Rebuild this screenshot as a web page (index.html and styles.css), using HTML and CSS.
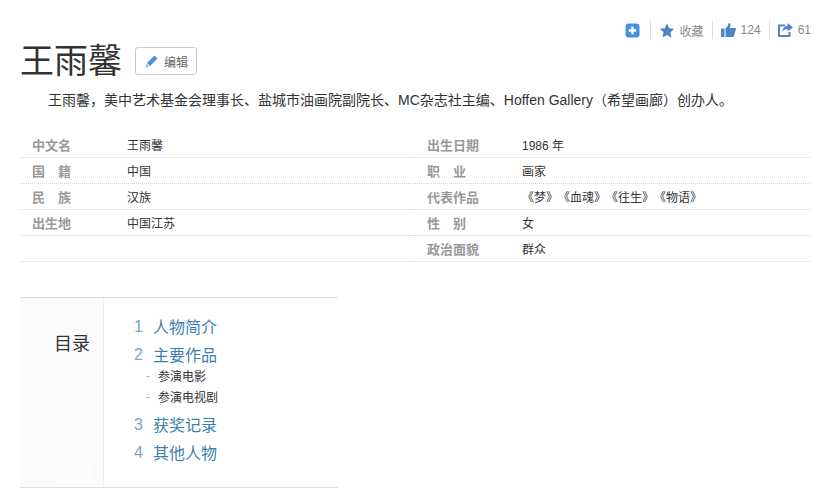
FILE: index.html
```html
<!DOCTYPE html>
<html lang="zh-CN">
<head>
<meta charset="utf-8">
<title>王雨馨</title>
<link rel="stylesheet" href="styles.css">
</head>
<body>
<div class="page">
  <div class="tools">
    <span class="tool"><svg class="ic" width="15" height="15" viewBox="0 0 15 15"><rect x="0.5" y="0.5" width="14" height="14" rx="3" fill="#4a90e2"/><path d="M7.5 3.8v7.4M3.8 7.5h7.4" stroke="#fff" stroke-width="2.4"/></svg></span>
    <span class="tool"><svg class="ic" width="16" height="15" viewBox="0 0 15 15"><path d="M7.5 0.5l2.2 4.700 5 .6-3.700 3.500 1 5.100-4.500-2.500-4.500 2.500 1-5.100L.3 5.800l5-.6z" fill="#4e85c5"/></svg><span>收藏</span></span>
    <span class="tool"><svg class="ic" width="15" height="14" viewBox="0 0 15 14"><path d="M0 5.500h3.500V14H0z M4.500 5.500L7 2.500 7.500 0c1.800 0 2.300 1.500 1.800 3L9 5H14c1 0 1.200 1 .8 1.800L13 13c-.2.600-.7 1-1.300 1H4.500z" fill="#4e85c5"/></svg><span>124</span></span>
    <span class="tool"><svg class="ic" width="15" height="14" viewBox="0 0 15 14"><path d="M7 2.500H1v10.500h10.500V9" fill="none" stroke="#4e85c5" stroke-width="2"/><path d="M9.500 0L15 4.200 9.500 8.500V6C7 6 5.500 7 4.500 9 4.500 5.500 6.500 3 9.500 2.700z" fill="#4e85c5"/></svg><span>61</span></span>
  </div>

  <div class="title-row">
    <h1 class="title">王雨馨</h1>
    <a class="edit"><svg width="13" height="13" viewBox="0 0 13 13"><path d="M9.500 .5l3 3-7.500 7.500-3-3z" fill="#4a90e2"/><path d="M1.300 8.700L4.300 11.700 .5 12.500z" fill="#8db8ea"/></svg><span>编辑</span></a>
  </div>

  <p class="desc">王雨馨，美中艺术基金会理事长、盐城市油画院副院长、MC杂志社主编、Hoffen Gallery（希望画廊）创办人。</p>

  <div class="info">
    <dl class="col">
      <div class="row"><dt>中文名</dt><dd>王雨馨</dd></div>
      <div class="row"><dt class="spaced">国籍</dt><dd>中国</dd></div>
      <div class="row"><dt class="spaced">民族</dt><dd>汉族</dd></div>
      <div class="row"><dt>出生地</dt><dd>中国江苏</dd></div>
      <div class="row"><dt></dt><dd></dd></div>
    </dl>
    <dl class="col">
      <div class="row"><dt>出生日期</dt><dd>1986 年</dd></div>
      <div class="row"><dt class="spaced">职业</dt><dd>画家</dd></div>
      <div class="row"><dt>代表作品</dt><dd class="works">《梦》《血魂》《往生》《物语》</dd></div>
      <div class="row"><dt class="spaced">性别</dt><dd>女</dd></div>
      <div class="row"><dt>政治面貌</dt><dd>群众</dd></div>
    </dl>
  </div>

  <div class="toc">
    <div class="toc-head">目录</div>
    <ol class="toc-list">
      <li class="lv1"><span class="num">1</span><span>人物简介</span></li>
      <li class="lv1"><span class="num">2</span><span>主要作品</span></li>
      <li class="lv2 first"><span class="dash">-</span><span>参演电影</span></li>
      <li class="lv2"><span class="dash">-</span><span>参演电视剧</span></li>
      <li class="lv1 after"><span class="num">3</span><span>获奖记录</span></li>
      <li class="lv1"><span class="num">4</span><span>其他人物</span></li>
    </ol>
    <div class="mark">ina 新浪</div>
  </div>
</div>
</body>
</html>
```
FILE: styles.css
```css
* { box-sizing: border-box; }
html, body { margin: 0; padding: 0; }
body { background: #fff; color: #333; font-family: "Liberation Sans", "Noto Sans CJK SC", sans-serif; overflow: hidden; }
.page { width: 823px; height: 492px; padding: 21px 12px 0 20px; }

.tools { display: flex; justify-content: flex-end; align-items: center; height: 18px; font-size: 12px; color: #888; }
.tool { display: flex; align-items: center; gap: 5px; padding: 0 8px; border-left: 1px solid #ddd; height: 18px; }
.tool:first-child { border-left: 0; padding-left: 0; padding-right: 10px; }
.tool:last-child { padding-right: 0; }
.tool .ic { flex: none; }

.title-row { display: flex; align-items: center; gap: 13px; margin-top: 3px; height: 38px; }
.title { margin: 0; font-size: 34px; line-height: 38px; font-weight: 400; color: #333; }
.edit { display: flex; align-items: center; gap: 6px; width: 62px; height: 28px; padding-left: 9px; border: 1px solid #ccc; border-radius: 3px; font-size: 12px; color: #666; }

.desc { margin: 8px 0 0; font-size: 14px; line-height: 24px; text-indent: 28px; color: #333; }

.info { display: flex; margin-top: 20px; width: 790px; }
.col { flex: 1; margin: 0; }
.row { display: flex; align-items: center; height: 26px; border-bottom: 1px dotted #d4d4d4; font-size: 12px; }
.row dt { width: 107px; padding-left: 12px; font-size: 13px; font-weight: 700; color: #999; flex: none; }
.row dt.spaced { width: 51px; margin-right: 56px; text-align-last: justify; }
.row dd { margin: 0; color: #333; }
.row dd.works { text-spacing-trim: space-all; }

.toc { position: relative; display: flex; width: 318px; height: 191px; margin-top: 35px; border-top: 1px solid #ddd; border-bottom: 1px solid #ddd; overflow: hidden; }
.toc-head { width: 84px; flex: none; padding: 33px 13px 0 0; text-align: right; font-size: 18px; line-height: 26px; color: #333; background: #fbfbfb; border-right: 1px solid #eee; }
.toc-list { margin: 0; padding: 14px 0 0 30px; list-style: none; }
.lv1 { display: flex; height: 28px; align-items: center; font-size: 16px; color: #3d7fae; }
.num { width: 19px; padding-top: 2px; color: #7ba6c9; }
.lv2 { display: flex; height: 21px; align-items: center; padding-left: 12px; font-size: 12px; color: #333; }
.lv2.first { margin-top: -3px; }
.lv1.after { margin-top: 3px; }
.dash { width: 12px; color: #aaa; }
.mark { position: absolute; left: 1px; bottom: 2px; white-space: nowrap; font-size: 19px; font-style: italic; font-weight: 700; color: #fff; opacity: .9; }
```
